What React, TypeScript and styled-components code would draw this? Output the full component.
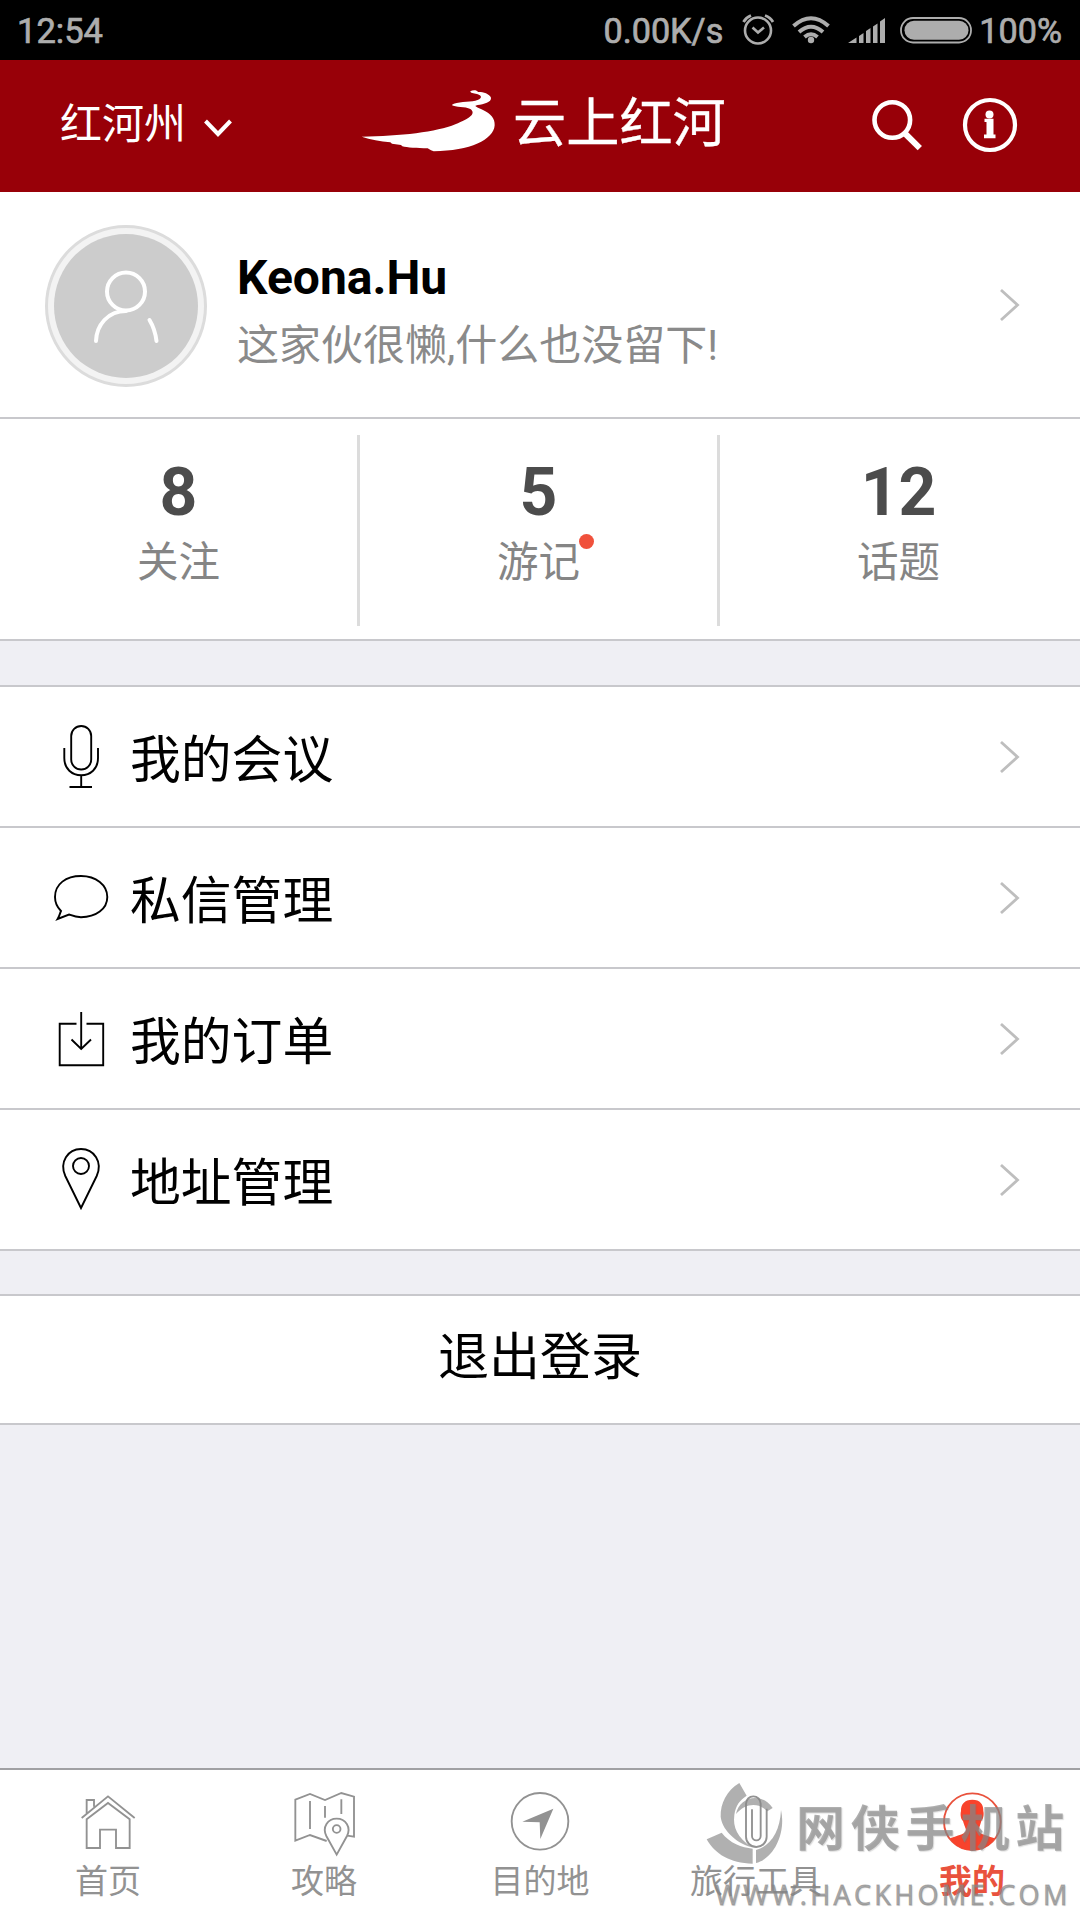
import React from 'react';
import styled, { createGlobalStyle } from 'styled-components';

const GlobalStyle = createGlobalStyle`
  * { box-sizing: border-box; }
  body {
    margin: 0;
    background: #efeff4;
    font-family: Roboto, 'Noto Sans CJK SC', sans-serif;
    color: #000;
  }
  svg { display: block; flex: none; overflow: visible; }
`;

const Screen = styled.div`
  position: relative;
  width: 1080px;
  height: 1920px;
  display: flex;
  flex-direction: column;
  overflow: hidden;
  background: #efeff4;
`;

const StatusBar = styled.div`
  height: 60px;
  padding: 3px 18px 0 17px;
  display: flex;
  align-items: center;
  justify-content: space-between;
  background: #000;
  color: #adadad;
  font-size: 34.5px;
  line-height: 57px;
  -webkit-text-stroke: 0.7px #adadad;
`;

const StatusGroup = styled.div`
  display: flex;
  align-items: center;
  font-size: 34.2px;
`;

const StatusIcons = styled.svg`
  width: 238px;
  height: 60px;
  margin: -3px 3px 0 15px;
`;

const Header = styled.header`
  height: 132px;
  padding: 0 60px;
  display: flex;
  align-items: center;
  background: #980008;
  color: #fff;
`;

const City = styled.div`
  width: 301px;
  display: flex;
  align-items: center;
  gap: 18px;
  font-size: 42px;
  line-height: 60px;
  padding-bottom: 2px;
`;

const CityArrow = styled.svg`
  width: 28px;
  height: 18px;
  margin-top: 5px;
`;

const Brand = styled.div`
  flex: 1;
  display: flex;
  align-items: center;
  gap: 17px;
  font-size: 53.2px;
  font-weight: 400;
  line-height: 70px;
  -webkit-text-stroke: 0.4px #fff;
`;

const BrandMark = styled.svg`
  width: 135px;
  height: 64px;
  margin-top: -10px;
`;

const BrandName = styled.span`
  margin-top: -5px;
`;

const Actions = styled.svg`
  width: 150px;
  height: 60px;
`;

const Profile = styled.section`
  height: 227px;
  padding: 0 60px 0 45px;
  display: flex;
  align-items: center;
  background: #fff;
  border-bottom: 2px solid #c8c8cc;
`;

const Avatar = styled.div`
  width: 162px;
  height: 162px;
  margin-top: 3px;
  border-radius: 50%;
  border: 3px solid #dcdcdc;
  background: #f3f3f3;
  padding: 6px;
`;

const AvatarFace = styled.div`
  width: 100%;
  height: 100%;
  border-radius: 50%;
  background: #ccc;
  display: flex;
  align-items: center;
  justify-content: center;
`;

const ProfileText = styled.div`
  flex: 1;
  padding: 17px 0 0 30px;
`;

const UserName = styled.div`
  font-size: 48px;
  font-weight: 700;
  line-height: 66px;
`;

const Bio = styled.div`
  font-size: 42px;
  line-height: 70px;
  color: #8a8a8a;
`;

const Stats = styled.section`
  height: 222px;
  padding: 16px 0 13px;
  display: grid;
  grid-template-columns: repeat(3, 1fr);
  background: #fff;
  border-bottom: 2px solid #c8c8cc;
`;

const Stat = styled.div<{ $last?: boolean }>`
  display: flex;
  flex-direction: column;
  align-items: center;
  padding-top: 20px;
  border-right: 3px solid ${(p) => (p.$last ? 'transparent' : '#dcdcdc')};
`;

const StatValue = styled.div`
  font-size: 66px;
  font-weight: 700;
  line-height: 76px;
  color: #4c4c4c;
`;

const StatLabel = styled.div`
  position: relative;
  margin-top: 2px;
  font-size: 41.5px;
  line-height: 60px;
  color: #858585;
`;

const Dot = styled.i`
  position: absolute;
  top: 1px;
  right: -14px;
  width: 15px;
  height: 15px;
  border-radius: 50%;
  background: #f0513c;
`;

const Menu = styled.nav`
  margin-top: 44px;
  border-top: 2px solid #c8c8cc;
`;

const MenuRow = styled.div`
  height: 141px;
  padding: 0 60px 0 48px;
  display: flex;
  align-items: center;
  background: #fff;
  border-bottom: 2px solid #c8c8cc;
`;

const MenuIcon = styled.svg`
  width: 66px;
  height: 72px;
  margin-top: -2px;
  fill: none;
  stroke: #000;
  stroke-width: 1.9;
`;

const MenuLabel = styled.span`
  flex: 1;
  padding: 8px 0 0 16px;
  font-size: 50.8px;
  line-height: 70px;
`;

const ChevronSvg = styled.svg`
  width: 21px;
  height: 34px;
  fill: none;
  stroke: #bebebe;
  stroke-width: 2.8;
`;

const Logout = styled.div`
  margin-top: 43px;
  height: 131px;
  padding-bottom: 3px;
  display: flex;
  align-items: center;
  justify-content: center;
  background: #fff;
  border-top: 2px solid #c8c8cc;
  border-bottom: 2px solid #c8c8cc;
  font-size: 51px;
  line-height: 70px;
`;

const TabBar = styled.nav`
  height: 152px;
  margin-top: auto;
  padding-top: 19px;
  display: grid;
  grid-template-columns: repeat(5, 1fr);
  background: #fff;
  border-top: 2px solid #a0a0a3;
`;

const Tab = styled.div<{ $active?: boolean }>`
  display: flex;
  flex-direction: column;
  align-items: center;
  color: ${(p) => (p.$active ? '#e9523d' : '#929292')};
  font-size: 33px;
  font-weight: ${(p) => (p.$active ? 700 : 400)};
  line-height: 54px;
  white-space: nowrap;
`;

const TabIcon = styled.svg`
  width: 66px;
  height: 66px;
  fill: none;
  stroke: currentColor;
  stroke-width: 5.6;
`;

const Watermark = styled.div`
  position: absolute;
  left: 700px;
  top: 1776px;
  width: 380px;
  height: 144px;
  color: rgba(135, 135, 135, 0.66);
  text-shadow: 1px 1px 1px rgba(110, 110, 110, 0.25);
  pointer-events: none;
`;

const WatermarkTop = styled.div`
  display: flex;
  height: 92px;
  padding-left: 6px;
`;

const WatermarkLogo = styled.svg`
  width: 78px;
  height: 82px;
  margin-top: 6px;
`;

const WatermarkName = styled.div`
  padding-left: 12px;
  font-family: 'Noto Sans CJK SC', sans-serif;
  font-size: 49px;
  font-weight: 700;
  letter-spacing: 5.8px;
  line-height: 97px;
  white-space: nowrap;
`;

const WatermarkUrl = styled.div`
  padding-left: 15px;
  font-family: 'Open Sans', 'Noto Sans', sans-serif;
  font-size: 27px;
  font-weight: 400;
  letter-spacing: 3.35px;
  line-height: 54px;
  white-space: nowrap;
  -webkit-text-stroke: 0.9px rgba(135, 135, 135, 0.6);
`;

const Chevron = () => (
  <ChevronSvg viewBox="0 0 21 34">
    <path d="M2 2 L18.5 17 L2 32" />
  </ChevronSvg>
);

const menu = [
  {
    label: '我的会议',
    icon: (
      <MenuIcon viewBox="48 720 66 72">
        <rect x="71.2" y="726" width="20" height="43.5" rx="10" />
        <path d="M64.3 748 V758 C64.3 769 72 775.3 81.2 775.3 C90.4 775.3 98 769 98 758 V748 M81.2 775.3 V787 M69.5 787 H92" />
      </MenuIcon>
    ),
  },
  {
    label: '私信管理',
    icon: (
      <MenuIcon viewBox="48 861 66 72">
        <path d="M61 911 C57 907 55 902 55 897 C55 884 66 876 81 876 C96 876 107.3 885 107.3 897 C107.3 909 96 917.2 81 917.2 C76 917.2 73 916 69 914.5 L57.6 919 C59.5 916 60 913 61 911 Z" />
      </MenuIcon>
    ),
  },
  {
    label: '我的订单',
    icon: (
      <MenuIcon viewBox="48 1002 66 72">
        <path d="M76.5 1023.8 H59.7 V1065.2 H103.2 V1023.8 H86.5 M81.2 1012 V1048.5 M71.5 1039.5 L81.2 1049 L91 1039.5" />
      </MenuIcon>
    ),
  },
  {
    label: '地址管理',
    icon: (
      <MenuIcon viewBox="48 1143 66 72">
        <path d="M81 1208 L65.3 1176 C59 1162 68 1149 81 1149 C94 1149 103 1162 96.7 1176 Z" />
        <circle cx="81" cy="1166" r="8" />
      </MenuIcon>
    ),
  },
];

const tabs = [
  {
    label: '首页',
    icon: (
      <TabIcon viewBox="225 117 198 198">
        <path d="M245 204 L324 139 L404 204 M260 190 V150 H282 V170 M260 208 L324 159 L389 208 V294 H348 V239 H300 V294 H260 Z" />
      </TabIcon>
    ),
  },
  {
    label: '攻略',
    icon: (
      <TabIcon viewBox="873 117 198 198">
        <path d="M980 273 L930 255 L886 272 V149 L930 132 L975 150 L1024 129 L1062 140 V260 L1042 257 M930 153 V237 M975 168 V203 M1024 148 V192" />
        <path d="M1010 314 L979 258 C966 232 983 206 1010 206 C1037 206 1054 232 1041 258 Z" fill="#fff" />
        <circle cx="1010" cy="237" r="11.5" />
      </TabIcon>
    ),
  },
  {
    label: '目的地',
    icon: (
      <TabIcon viewBox="201 117 198 198">
        <circle cx="300" cy="214" r="85" />
        <path d="M340 176 L247 215 L299 217 L301 267 Z" fill="currentColor" stroke="none" />
      </TabIcon>
    ),
  },
  {
    label: '旅行工具',
    icon: (
      <TabIcon viewBox="129 117 198 198">
        <path d="M242 176 V258 A13 13 0 0 1 216 258 V178 M198 260 V161 A22 22 0 0 1 242 161 V180 M198 260 A31 31 0 0 0 260 260 V176" />
      </TabIcon>
    ),
  },
  {
    label: '我的',
    active: true,
    icon: (
      <TabIcon viewBox="777 117 198 198">
        <circle cx="877" cy="215" r="85" />
        <path
          d="M877 149 C900 149 911 163 910 183 C913 195 909 208 904 213 C900 228 896 235 896 242 C900 254 925 257 944 265 C930 290 904 301 877 301 C850 301 824 290 810 265 C828 257 854 254 858 242 C858 235 853 228 849 213 C843 208 840 195 843 183 C842 163 854 149 877 149 Z"
          fill="#f8432c"
          stroke="none"
        />
      </TabIcon>
    ),
  },
];

export default function App() {
  return (
    <Screen>
      <GlobalStyle />
      <StatusBar>
        <span>12:54</span>
        <StatusGroup>
          <span>0.00K/s</span>
          <StatusIcons viewBox="738 0 238 60" fill="none" stroke="#adadad">
            <circle cx="758" cy="30.5" r="13" strokeWidth="2.6" />
            <path d="M752.5 27.5 L758 32.5 L764 27.5" strokeWidth="2.6" />
            <path d="M743.5 22 Q746 17.5 751 15.5 M773 22 Q770.5 17.5 765 15.5" strokeWidth="2.8" />
            <path d="M793.5 26 Q811 10.5 828.5 26 M799 32 Q811 21.5 823 32 M804.5 37 Q811 31.5 817.5 37" strokeWidth="4" />
            <circle cx="811" cy="40" r="3.2" fill="#adadad" stroke="none" />
            <path
              d="M848 43 L856.5 37.5 V43 Z M859 36 L863.5 33 V43 H859 Z M866 31 L870.5 28 V43 H866 Z M873 26.5 L877.5 23.5 V43 H873 Z M880 21.5 L885 18 V43 H880 Z"
              fill="#adadad"
              stroke="none"
            />
            <rect x="901" y="18" width="70" height="24.5" rx="12" strokeWidth="1.8" />
            <rect x="904.5" y="20.7" width="64" height="19" rx="9.5" fill="#adadad" stroke="none" />
          </StatusIcons>
          <span>100%</span>
        </StatusGroup>
      </StatusBar>

      <Header>
        <City>
          红河州
          <CityArrow viewBox="0 0 28 18" fill="none" stroke="#fff" strokeWidth="4">
            <path d="M1.5 2 L14 15 L26.5 2" />
          </CityArrow>
        </City>
        <Brand>
          <BrandMark viewBox="62 86 405 192" fill="#fff">
            <path d="M64 229 C180 228 290 215 345 192 C390 173 408 160 390 146 C375 138 345 142 334 134 C350 122 385 126 405 121 C425 116 428 106 410 101 C400 99 389 98 390 93 C398 88 410 89 413 95 C425 94 447 99 452 112 C454 126 430 131 412 134 C396 137 412 141 428 149 C452 161 464 174 463 195 C460 238 390 272 280 273 L272 270 L262 264 C230 264 200 262 186 258 L182 254 L155 250 L150 246 C120 243 90 238 64 229 Z" />
          </BrandMark>
          <BrandName>云上红河</BrandName>
        </Brand>
        <Actions viewBox="870 96 150 60" fill="none" stroke="#fff">
          <circle cx="892.3" cy="120" r="17.8" strokeWidth="4.6" />
          <path d="M904.5 133 L919.8 148.2" strokeWidth="6" />
          <circle cx="990" cy="125" r="25" strokeWidth="4.2" />
          <circle cx="989.5" cy="114.5" r="4" fill="#fff" stroke="none" />
          <path d="M984.5 118.8 H993.5 V134.5 H995.5 V138.3 H984 V134.5 H986.5 V122 H984.5 Z" fill="#fff" stroke="none" />
        </Actions>
      </Header>

      <Profile>
        <Avatar>
          <AvatarFace>
            <svg width="72" height="80" viewBox="90 266 72 80" fill="none" stroke="#fff" strokeWidth="4" strokeLinecap="round">
              <circle cx="126" cy="291.5" r="19" />
              <path d="M126 311 C108 311 96.5 325 96 341 M149.500 320 Q155 329 156.500 341" />
            </svg>
          </AvatarFace>
        </Avatar>
        <ProfileText>
          <UserName>Keona.Hu</UserName>
          <Bio>这家伙很懒,什么也没留下!</Bio>
        </ProfileText>
        <Chevron />
      </Profile>

      <Stats>
        <Stat>
          <StatValue>8</StatValue>
          <StatLabel>关注</StatLabel>
        </Stat>
        <Stat>
          <StatValue>5</StatValue>
          <StatLabel>
            游记
            <Dot />
          </StatLabel>
        </Stat>
        <Stat $last>
          <StatValue>12</StatValue>
          <StatLabel>话题</StatLabel>
        </Stat>
      </Stats>

      <Menu>
        {menu.map((item) => (
          <MenuRow key={item.label}>
            {item.icon}
            <MenuLabel>{item.label}</MenuLabel>
            <Chevron />
          </MenuRow>
        ))}
      </Menu>

      <Logout>退出登录</Logout>

      <TabBar>
        {tabs.map((tab) => (
          <Tab key={tab.label} $active={tab.active}>
            {tab.icon}
            <span>{tab.label}</span>
          </Tab>
        ))}
      </TabBar>

      <Watermark>
        <WatermarkTop>
          <WatermarkLogo viewBox="78 96 234 246" fill="rgba(135,135,135,0.66)">
            <path d="M178 99 C140 122 121 160 122 200 C126 235 160 275 215 292 C172 262 158 232 163 195 C167 165 180 150 200 137 Z" />
            <path d="M80 268 L125 248 C150 280 185 292 218 296 V341 C150 340 105 312 80 268 Z" />
            <path d="M303 180 C318 245 285 325 228 339 V300 C272 288 300 245 303 180 Z" />
            <path d="M168 192 C178 140 245 125 278 174 L262 184 C235 155 195 160 168 192 Z" />
          </WatermarkLogo>
          <WatermarkName>网侠手机站</WatermarkName>
        </WatermarkTop>
        <WatermarkUrl>WWW.HACKHOME.COM</WatermarkUrl>
      </Watermark>
    </Screen>
  );
}
